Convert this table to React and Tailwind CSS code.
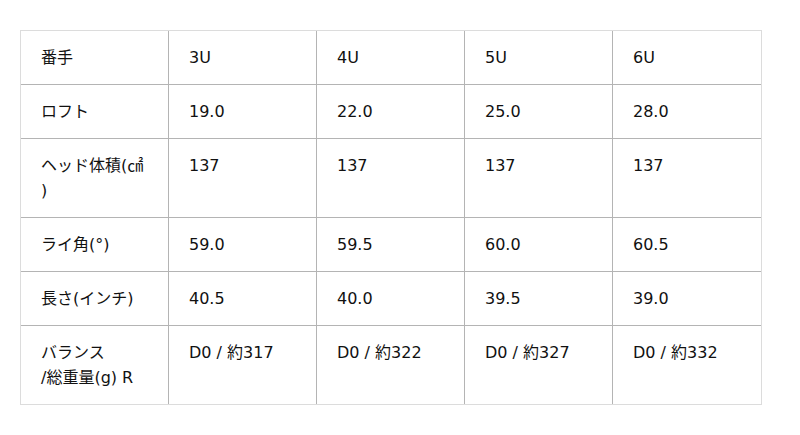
const rows = [
  ["番手", "3U", "4U", "5U", "6U"],
  ["ロフト", "19.0", "22.0", "25.0", "28.0"],
  ["ヘッド体積(㎠\n)", "137", "137", "137", "137"],
  ["ライ角(°)", "59.0", "59.5", "60.0", "60.5"],
  ["長さ(インチ)", "40.5", "40.0", "39.5", "39.0"],
  ["バランス\n/総重量(g) R", "D0 / 約317", "D0 / 約322", "D0 / 約327", "D0 / 約332"],
];

const App = () => {
  return (
    <div className="min-h-[435px] w-[800px] bg-white pt-[30px] pl-5">
      <div className="w-[742px] border border-[#dcdcdc]">
        <table
          className="w-[740px] table-fixed border-separate border-spacing-0 text-[16px] leading-[25px] text-[#111]"
          style={{ fontFamily: '"DejaVu Sans", "Noto Sans CJK JP", sans-serif' }}
        >
          <tbody>
            {rows.map((row, ri) => (
              <tr key={ri}>
                {row.map((cell, ci) => (
                  <td
                    key={ci}
                    className={`w-[148px] px-5 py-[14px] align-top whitespace-pre-line border-[#b4b4b4] ${
                      ci < 4 ? "border-r" : ""
                    } ${ri < rows.length - 1 ? "border-b" : ""}`}
                  >
                    {cell}
                  </td>
                ))}
              </tr>
            ))}
          </tbody>
        </table>
      </div>
    </div>
  );
};

export default App;
